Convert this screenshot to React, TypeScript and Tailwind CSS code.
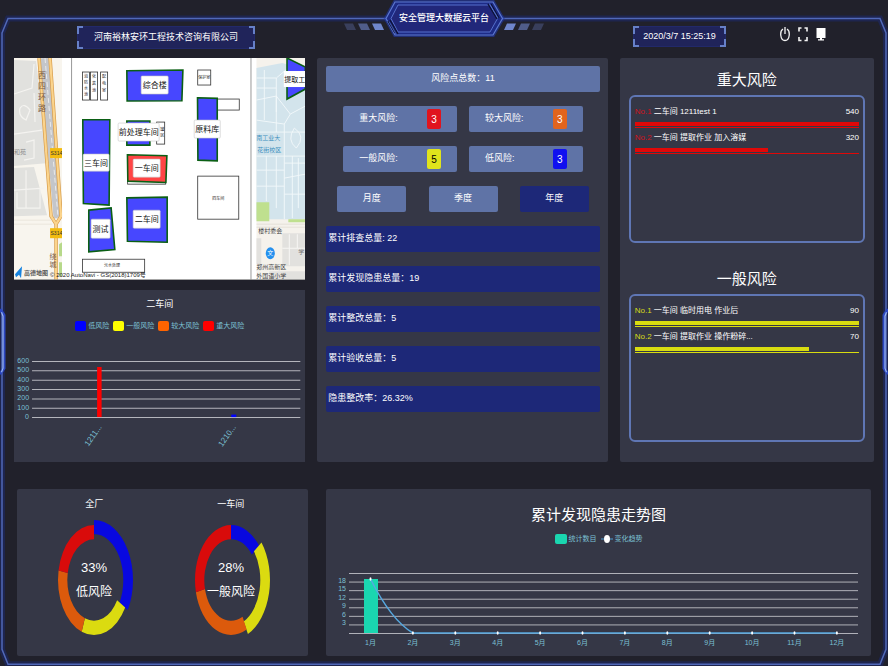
import type { ReactNode } from "react";

const BLUE = "#0808e0";
const YELLOW = "#dbdb10";
const ORANGE = "#dc5a0c";
const RED = "#d90b0b";

function PageFrame() {
  return (
    <svg
      className="pointer-events-none absolute inset-0 h-full w-full"
      viewBox="0 0 888 666"
      preserveAspectRatio="none"
      fill="none"
      aria-hidden="true"
    >
      <path d="M2 33 L8 18.5 H880 L886 33 V649 L880 664 H8 L2 649 Z" stroke="#1d2868" strokeWidth="6" opacity="0.6" />
      <path d="M2 33 L8 18.5 H880 L886 33 V649 L880 664 H8 L2 649 Z" stroke="#5068b8" strokeWidth="1.5" />
      <path d="M0 309 L4 315 V368 L0 374 M888 309 L884 315 V368 L888 374" stroke="#2c47c0" strokeWidth="3" />
      <path d="M1.5 312 L3 316 V368 L1.5 372 M886.5 312 L885 316 V368 L886.5 372" stroke="#9db8f0" strokeWidth="1.2" />
    </svg>
  );
}

function Tag({ children, className }: { children: ReactNode; className: string }) {
  return (
    <div className={`relative flex items-center justify-center border border-[#22296a] bg-[#20245a] text-[9px] text-white ${className}`}>
      <span className="absolute -top-px -left-px h-2 w-1.5 border-t-2 border-l-2 border-[#6680c8]" />
      <span className="absolute -top-px -right-px h-2 w-1.5 border-t-2 border-r-2 border-[#6680c8]" />
      <span className="absolute -bottom-px -left-px h-2 w-1.5 border-b-2 border-l-2 border-[#6680c8]" />
      <span className="absolute -right-px -bottom-px h-2 w-1.5 border-r-2 border-b-2 border-[#6680c8]" />
      {children}
    </div>
  );
}

function TitleBadge() {
  return (
    <div className="relative h-[37px] w-[200px]">
      <svg className="absolute inset-0 h-full w-full" viewBox="0 0 200 37" fill="none" aria-hidden="true">
        <g fill="#6f86cc">
          <path d="M0 23.5h9l3 6.5h-9z" opacity="0.3" />
          <path d="M14 23.5h9l3 6.5h-9z" opacity="0.6" />
          <path d="M28 23.5h9l3 6.5h-9z" />
          <path d="M163 23.5h9l-3 6.5h-9z" />
          <path d="M177 23.5h9l-3 6.5h-9z" opacity="0.6" />
          <path d="M191 23.5h9l-3 6.5h-9z" opacity="0.3" />
        </g>
        <path d="M42 18.5 L51 2 H149 L158.5 18.5 L149 35 H51 Z" stroke="#2238a8" strokeWidth="4" opacity="0.6" />
        <path d="M42 18.5 L51 2 H149 L158.5 18.5 L149 35 H51 Z" fill="#1d2b86" stroke="#5c78d0" strokeWidth="1.2" />
        <path d="M47 18.5 L54 5 H146 L153.5 18.5 L146 32 H54 Z" fill="#21277a" stroke="#5670cc" strokeWidth="1" />
        <path d="M44 21 L51 33 M46 20 L54 34 M144 4 L153 19 M147 4 L155 18" stroke="#0d1238" strokeWidth="1.4" />
        <path d="M45 21.5 L52 34 M145.5 3.5 L154 18" stroke="#5c78d0" strokeWidth="0.7" />
      </svg>
      <h1 className="relative flex h-full items-center justify-center text-[9px] font-medium text-white">安全管理大数据云平台</h1>
    </div>
  );
}

function Header() {
  return (
    <header className="relative grid h-[58px] grid-cols-[1fr_auto_1fr] items-start">
      <div className="pt-[26px] pl-[77px]">
        <Tag className="h-[23px] w-[178px]">河南裕林安环工程技术咨询有限公司</Tag>
      </div>
      <TitleBadge />
      <div className="flex items-start pt-[26px] pr-[62px] pl-[89px]">
        <Tag className="h-[21px] w-[93px]">
          <time dateTime="2020-03-07T15:25:19">2020/3/7 15:25:19</time>
        </Tag>
        <div className="ml-auto flex items-start gap-2">
          <button type="button" aria-label="退出">
            <svg className="block h-4 w-2.5" viewBox="0 0 10 16" fill="none" stroke="#f4f4f4" strokeWidth="1.3">
              <path d="M5 1V8M3 3C-0.5 5 0 14.5 5 14.5S10.5 5 7 3" />
            </svg>
          </button>
          <button type="button" aria-label="全屏">
            <svg className="block h-4 w-2.5" viewBox="0 0 10 16" fill="none" stroke="#f4f4f4" strokeWidth="1.6">
              <path d="M1 5.5V2H3.5M6.500 2H9V5.5M9 11V14.500H6.5M3.500 14.500H1V11" />
            </svg>
          </button>
          <button type="button" aria-label="显示器">
            <svg className="block h-4 w-2.5" viewBox="0 0 10 16" fill="#fff">
              <path d="M0.5 2H9.5V12H0.5ZM4 12H6V13.2H8V14.5H2V13.2H4Z" />
            </svg>
          </button>
        </div>
      </div>
    </header>
  );
}

function Label({ x, y, w, h, children }: { x: number; y: number; w: number; h: number; children: string }) {
  return (
    <g>
      <rect x={x} y={y} width={w} height={h} rx="1" fill="#fff" stroke="#c8c8c8" strokeWidth="0.6" />
      <text x={x + w / 2} y={y + h / 2 + 3} textAnchor="middle" fontSize="8" fill="#111">
        {children}
      </text>
    </g>
  );
}

function Vertical({ x, y, step, text, size, fill }: { x: number; y: number; step: number; text: string; size: number; fill: string }) {
  return (
    <g fontSize={size} fill={fill} textAnchor="middle">
      {Array.from(text).map((c, i) => (
        <text key={i} x={x} y={y + i * step}>
          {c}
        </text>
      ))}
    </g>
  );
}

function SiteMap() {
  return (
    <svg className="block w-full" viewBox="0 0 291 222" role="img" aria-label="厂区地图">
      <rect width="291" height="222" fill="#fff" />
      <clipPath id="west">
        <rect width="48" height="222" />
      </clipPath>
      <g clipPath="url(#west)">
        <rect width="48" height="222" fill="#f8f5ee" />
        <path d="M0 2 L22 3 L29 57 L35 105 L0 108Z M0 110 L20 109 L33 157 L0 158Z" fill="#e1e1de" />
        <path
          d="M0 36 L18 30 L20 6 M6 50 Q10 44 16 52 L12 62 Q4 58 6 50 M0 76 L28 72 M12 84 L20 82 L20 100 L10 102 M0 132 L30 130 M3 134V150H26V130 M12 112V150M20 35L21 64"
          fill="none"
          stroke="#f4f3f0"
          strokeWidth="1.2"
        />
        <path d="M30 0 L44 160" stroke="#c4c6ca" strokeWidth="9" />
        <path d="M31 0 L44 160" stroke="#f2f2f2" strokeWidth="0.8" strokeDasharray="5 3" />
        <path d="M25 0 L37 158 L42 166 V222 M36 0 L47 158 L42 166" fill="none" stroke="#d69a48" strokeWidth="3.5" />
        <path d="M25 0 L37 158 L42 166 V222 M36 0 L47 158 L42 166" fill="none" stroke="#fbd48c" strokeWidth="2.2" />
        <path d="M0 162H38M0 166H38" stroke="#e6e2d8" strokeWidth="0.8" />
        <path d="M45 186l3-2v14h-3zM45 204h3v14h-3z" fill="#b7d98a" />
        <rect x="36" y="90" width="12" height="10" fill="#f2bc10" />
        <text x="36.5" y="97" fontSize="5" fill="#333">S314</text>
        <rect x="36" y="170" width="12" height="10" fill="#f2bc10" />
        <text x="36.5" y="177" fontSize="5" fill="#333">S314</text>
        <Vertical x={28} y={20} step={11} text="西四环路" size={8} fill="#7b5b48" />
        <Vertical x={39} y={201} step={8} text="绕城" size={7} fill="#7b5b48" />
        <text x="0" y="96" fontSize="6" fill="#8c8c8c">和苑</text>
      </g>
      <path d="M57.5 0V222M236.7 0V222" stroke="#999" strokeWidth="1" />

      <g fill="#fff" stroke="#333" strokeWidth="0.8">
        <rect x="68.5" y="14" width="7" height="28" />
        <rect x="76.5" y="14" width="7" height="28" />
        <rect x="86.5" y="14" width="7" height="28" />
        <rect x="183.5" y="12" width="13" height="15" />
        <rect x="203" y="41" width="22" height="11" />
        <rect x="183.5" y="118" width="41" height="43" />
        <rect x="68.5" y="201" width="62" height="13" />
        <rect x="142.5" y="64" width="8" height="22" />
        <rect x="113.5" y="98" width="38" height="28" />
      </g>
      <Vertical x={72} y={20} step={6} text="消防水池" size={4} fill="#222" />
      <Vertical x={80} y={20} step={7} text="化粪池" size={4} fill="#222" />
      <Vertical x={90} y={20} step={7} text="配电室" size={4} fill="#222" />
      <Vertical x={148} y={73} step={6} text="罐区" size={4} fill="#222" />
      <g textAnchor="middle" fill="#222">
        <text x="190" y="21" fontSize="4">保护室</text>
        <text x="204" y="142" fontSize="4">四车间</text>
        <text x="98" y="209" fontSize="4">污水处理</text>
      </g>

      <g fill="#4747ff" stroke="#0b5f14" strokeWidth="1.6">
        <path d="M112.7 12.7 L168.7 12 L167.7 42.7 L113 43Z" />
        <path d="M68.7 61.7 H95.7 L95 147 L69.3 145.3Z" />
        <path d="M112.7 63 H135.7 V87 H112.7Z" />
        <path d="M112.7 139.7 L153 139 V184 L113.3 183Z" />
        <path d="M74.7 152 L97 149.7 L100.7 191.3 L74.7 193.7Z" />
        <path d="M183.3 39.7 L203 40.3 V102.7 L183.7 102Z" />
        <path d="M113.3 96.7 L152.7 97.7 L151.7 124.3 L113.7 123Z" fill="#ff4545" />
      </g>

      <clipPath id="east">
        <rect x="242" width="49" height="222" />
      </clipPath>
      <g clipPath="url(#east)">
        <rect x="242" width="49" height="222" fill="#f5f2ec" />
        <path d="M242 10 L268 5 L291 12 V161 H242Z" fill="#d3e4ec" />
        <path
          d="M242 20H262L274 10M250 12V62M242 42L262 38L276 56L291 48M262 20V54M242 30H262M242 62L270 66L276 56M270 66V161M242 98H291M252 98V143M262 98V150M242 112H270M242 128H270M280 70Q292 78 282 90Q272 82 280 70M270 105H291M278 98V160M270 120L291 116M270 136H291M284 100V150M262 38V74M242 74H291"
          fill="none"
          stroke="#f3f8fa"
          strokeWidth="0.9"
        />
        <path d="M242 144H255V163H242ZM274 161H291V164H274Z" fill="#bfe08f" />
        <path d="M268 175H291V208H268ZM242 180H247V206H242ZM255 213H291V222H255Z" fill="#e2e1de" />
        <path d="M242 166H291M242 169H291" stroke="#dedad0" strokeWidth="0.7" />
        <path d="M275 176V207M268 190H291M283 176V190" stroke="#f7f6f4" strokeWidth="1" />
        <g fontSize="6" fill="#3d8fbe">
          <text x="242" y="82">南工业大</text>
          <text x="243" y="94">花街校区</text>
        </g>
        <g fontSize="6" fill="#444">
          <text x="244" y="175">楼村委会</text>
          <text x="242" y="211">郑州高新区</text>
          <text x="242" y="220">外国语小学</text>
          <text x="284" y="196" fill="#777">学</text>
        </g>
        <ellipse cx="256" cy="195" rx="4.5" ry="6" fill="#2590ee" />
        <text x="256" y="197" fontSize="6" textAnchor="middle" fill="#fff">文</text>
        <path d="M272.7 0 L291 9 V31 L272.7 41Z" fill="#4747ff" stroke="#0b5f14" strokeWidth="1.6" />
        <rect x="269.5" y="13" width="24" height="16" fill="#fff" />
        <text x="270" y="24" fontSize="7" fill="#111">提取工</text>
      </g>

      <Label x={127} y={18} w={27} h={18}>综合楼</Label>
      <Label x={69} y={96} w={26} h={17}>三车间</Label>
      <Label x={104} y={65} w={41} h={18}>前处理车间</Label>
      <Label x={119} y={101} w={27} h={18}>一车间</Label>
      <Label x={119} y={152} w={27} h={18}>二车间</Label>
      <Label x={77} y={161} w={19} h={19}>测试</Label>
      <Label x={180} y={62} w={26} h={18}>原料库</Label>

      <path d="M1 216 L8 208 L7 220 L5 216.5 L2 219Z" fill="#1683e0" />
      <text x="10" y="217" fontSize="6" fontWeight="bold" fill="#555">高德地图</text>
      <text x="36" y="219" fontSize="6" fill="#222">© 2020 AutoNavi - GS(2018)1709号</text>
      <path d="M0 221.5H291" stroke="#888" />
    </svg>
  );
}

const levels = [
  { name: "低风险", swatch: "bg-[#0000ff]" },
  { name: "一般风险", swatch: "bg-[#ffff00]" },
  { name: "较大风险", swatch: "bg-[#ff6400]" },
  { name: "重大风险", swatch: "bg-[#ff0000]" },
];

function WorkshopChart() {
  return (
    <section className="bg-[#353746]">
      <h2 className="flex h-7 items-center justify-center text-[9px] text-white">二车间</h2>
      <ul className="flex h-4 items-center justify-center gap-1 text-[7px] text-[#7cc0d4]">
        {levels.map((l) => (
          <li key={l.name} className="flex items-center gap-0.5">
            <span className={`h-2.5 w-[11px] rounded-xs ${l.swatch}`} />
            {l.name}
          </li>
        ))}
      </ul>
      <svg className="mt-3 block w-full" viewBox="0 0 291 116" role="img" aria-label="二车间风险值">
        {[600, 500, 400, 300, 200, 100, 0].map((v, i) => (
          <g key={v}>
            <path d={`M18 ${15.5 + i * 9.333}H286`} stroke="#b4b5bc" strokeWidth="1" />
            <text x="15" y={17 + i * 9.333} textAnchor="end" fontSize="7" fill="#7cc0d4">
              {v}
            </text>
          </g>
        ))}
        <rect x="83" y="21" width="4.5" height="50" fill="#f00" />
        <rect x="217" y="68.5" width="5" height="2.5" fill="#00f" />
        <g fontSize="8" fill="#7cc0d4" textAnchor="end">
          <text transform="translate(88 81) rotate(-55)">1211...</text>
          <text transform="translate(222 81) rotate(-55)">1210...</text>
        </g>
      </svg>
    </section>
  );
}

const counts = [
  { name: "重大风险:", value: 3, tone: "bg-[#e0141e] text-white" },
  { name: "较大风险:", value: 3, tone: "bg-[#e2641c] text-white" },
  { name: "一般风险:", value: 5, tone: "bg-[#e0e41c] text-black" },
  { name: "低风险:", value: 3, tone: "bg-[#1010f0] text-white" },
];

const periods = ["月度", "季度", "年度"];

const totals = ["累计排查总量: 22", "累计发现隐患总量：19", "累计整改总量：5", "累计验收总量：5", "隐患整改率：26.32%"];

function RiskSummary() {
  return (
    <section className="flex flex-col gap-3.5 rounded-xs bg-[#353746] pt-2 pr-2 pl-[9px] text-[9px] text-white">
      <h2 className="flex h-[26px] items-center justify-center rounded-xs bg-[#5f73a6]">风险点总数：11</h2>
      <ul className="grid grid-cols-2 gap-x-3 gap-y-3.5 px-[17px]">
        {counts.map((c) => (
          <li key={c.name} className="flex h-[26px] items-center justify-between rounded-xs bg-[#5f73a6] px-4">
            {c.name}
            <span className={`flex h-5 w-3.5 items-center justify-center rounded-xs text-[10px] ${c.tone}`}>{c.value}</span>
          </li>
        ))}
      </ul>
      <div className="flex justify-between px-[11px]">
        {periods.map((p) => (
          <button
            key={p}
            type="button"
            aria-pressed={p === "年度"}
            className="h-[26px] w-[69px] rounded-xs bg-[#5f73a6] aria-pressed:bg-[#1d2878]"
          >
            {p}
          </button>
        ))}
      </div>
      <ul className="flex flex-col gap-3.5">
        {totals.map((t) => (
          <li key={t} className="flex h-[26px] items-center rounded-xs bg-[#1d2878] px-0.5">
            {t}
          </li>
        ))}
      </ul>
    </section>
  );
}

interface Rank {
  name: string;
  value: number;
}

function Ranking({ title, rows, text, bar }: { title: string; rows: Rank[]; text: string; bar: string }) {
  return (
    <section className="flex flex-1 flex-col">
      <h2 className="flex h-[37px] items-center justify-center pt-2 text-[15px] text-white">{title}</h2>
      <ol className="flex flex-1 flex-col gap-[3px] rounded-md border-2 border-[#5f76b4] px-1 pt-2 text-[8px] text-white">
        {rows.map((r, i) => (
          <li key={r.name}>
            <div className="mb-1 flex h-[13px] items-center">
              <span className={`w-[19px] ${text}`}>No.{i + 1}</span>
              <span>{r.name}</span>
              <span className="ml-auto">{r.value}</span>
            </div>
            <div className={`h-1 ${bar}`} style={{ width: `${(r.value / rows[0].value) * 100}%` }} />
            <div className={`mt-px h-px ${bar}`} />
          </li>
        ))}
      </ol>
    </section>
  );
}

function arc(start: number, end: number, active: boolean) {
  const [ox, oy, ix, iy] = active ? [39, 60, 29.3, 46] : [36, 55, 26.7, 40.7];
  const at = (deg: number, rx: number, ry: number) => {
    const a = (deg * Math.PI) / 180;
    return `${(Math.sin(a) * rx).toFixed(2)} ${(-Math.cos(a) * ry).toFixed(2)}`;
  };
  return `M${at(start, ox, oy)}A${ox} ${oy} 0 0 1 ${at(end, ox, oy)}L${at(end, ix, iy)}A${ix} ${iy} 0 0 0 ${at(start, ix, iy)}Z`;
}

function Donut({ title, values, active, name, percent }: { title: string; values: number[]; active: number; name: string; percent: string }) {
  const colors = [BLUE, YELLOW, ORANGE, RED];
  const total = values.reduce((a, b) => a + b, 0);
  const stops = values.map((_, i) => (values.slice(0, i).reduce((a, b) => a + b, 0) / total) * 360);
  return (
    <figure className="flex flex-col items-center">
      <figcaption className="flex h-[29px] items-center pt-0.5 text-[9px] text-white">{title}</figcaption>
      <svg className="h-[125px] w-[90px]" viewBox="-45 -62 90 125" role="img" aria-label={title}>
        {values.map((v, i) => (
          <path key={i} d={arc(stops[i], stops[i] + (v / total) * 360, i === active)} fill={colors[i]} />
        ))}
        <g fill="#fff" textAnchor="middle">
          <text y="-8" fontSize="13">{percent}</text>
          <text y="16" fontSize="12">{name}</text>
        </g>
      </svg>
    </figure>
  );
}

function TrendChart() {
  const months = Array.from({ length: 12 }, (_, i) => i + 1);
  const step = 42.4;
  const x = (m: number) => 44.5 + (m - 1) * step;
  return (
    <section className="rounded-xs bg-[#353746]">
      <h2 className="flex h-[38px] items-center justify-center pt-[13px] text-[15px] text-white">累计发现隐患走势图</h2>
      <ul className="flex h-[23px] items-center justify-center gap-1 text-[7px] text-[#7cc0d4]">
        <li className="flex items-center gap-0.5">
          <span className="h-2.5 w-3 rounded-xs bg-[#1ad6b0]" />
          统计数目
        </li>
        <li className="flex items-center gap-0.5">
          <svg className="h-2.5 w-3" viewBox="0 0 12 10" aria-hidden="true">
            <path d="M0 5H12" stroke="#4a9bd0" />
            <ellipse cx="6" cy="5" rx="3" ry="4" fill="#fff" />
          </svg>
          变化趋势
        </li>
      </ul>
      <svg className="block w-full" viewBox="0 0 545 106" role="img" aria-label="每月隐患数">
        {[21, 18, 15, 12, 9, 6, 3, 0].map((v) => (
          <g key={v}>
            <path d={`M23 ${83.5 - v * 2.857}H532`} stroke="#b0b1b9" strokeWidth="1" />
            {v > 0 && v < 21 && (
              <text x="20" y={84 - v * 2.857} textAnchor="end" fontSize="7" fill="#7cc0d4">
                {v}
              </text>
            )}
          </g>
        ))}
        <rect x="38" y="29" width="14" height="54" fill="#1ad6b0" />
        <path d={`M${x(1)} 29C55 50 70 73 ${x(2)} 83H${x(12)}`} fill="none" stroke="#56a8e0" strokeWidth="1.5" />
        {months.map((m) => (
          <g key={m}>
            <ellipse cx={x(m)} cy={m === 1 ? 29 : 83} rx="1" ry="1.8" fill="#fff" />
            <text x={x(m)} y="95" textAnchor="middle" fontSize="7" fill="#7cc0d4">
              {m}月
            </text>
          </g>
        ))}
      </svg>
    </section>
  );
}

export default function App() {
  return (
    <div className="relative flex min-h-screen flex-col bg-[#21212b] pb-2.5 font-['Liberation_Sans','Noto_Sans_CJK_SC',sans-serif]">
      <PageFrame />
      <Header />
      <main className="relative flex flex-1 flex-col gap-[27px]">
        <div className="grid flex-1 grid-cols-[291fr_290fr_254fr] gap-3 px-3.5">
          <div className="flex flex-col gap-2.5">
            <SiteMap />
            <WorkshopChart />
          </div>
          <RiskSummary />
          <div className="flex flex-col gap-3.5 rounded-xs bg-[#353746] px-[9px] pb-5">
            <Ranking
              title="重大风险"
              text="text-[#d01420]"
              bar="bg-[#e00808]"
              rows={[
                { name: "二车间 1211test 1", value: 540 },
                { name: "一车间 提取作业 加入溶媒", value: 320 },
              ]}
            />
            <Ranking
              title="一般风险"
              text="text-[#d8dc18]"
              bar="bg-[#d8dc10]"
              rows={[
                { name: "一车间 临时用电 作业后", value: 90 },
                { name: "一车间 提取作业 操作粉碎...", value: 70 },
              ]}
            />
          </div>
        </div>
        <div className="grid grid-cols-[291fr_545fr] gap-[18px] px-[17px]">
          <section className="grid grid-cols-2 rounded-xs bg-[#353746] px-[9px]">
            <Donut title="全厂" values={[3, 2, 2, 2]} active={0} percent="33%" name="低风险" />
            <Donut title="一车间" values={[1, 2, 2, 2]} active={1} percent="28%" name="一般风险" />
          </section>
          <TrendChart />
        </div>
      </main>
    </div>
  );
}
